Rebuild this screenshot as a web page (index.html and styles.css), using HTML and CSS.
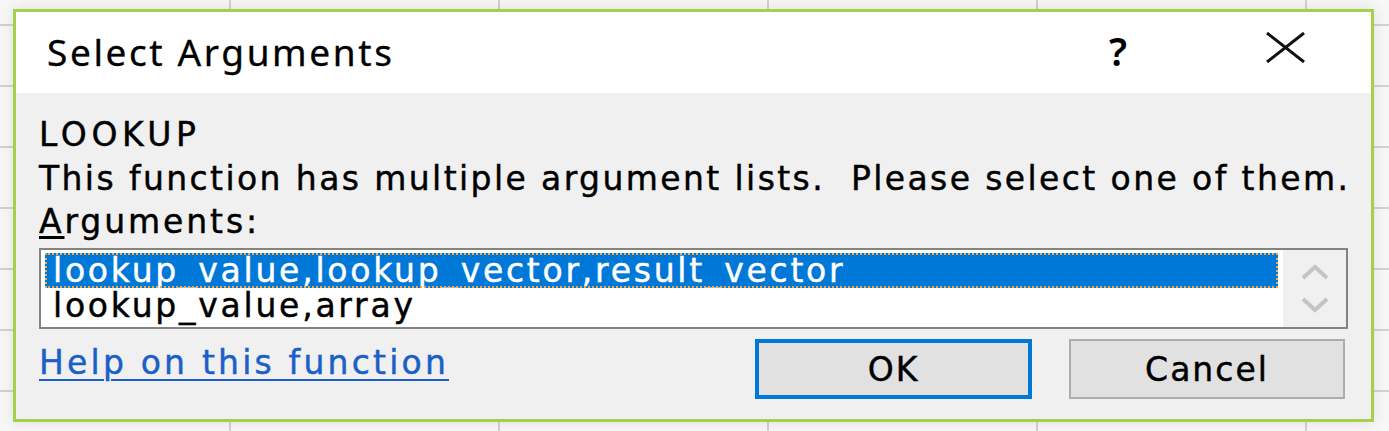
FILE: index.html
```html
<!DOCTYPE html>
<html>
<head>
<meta charset="utf-8">
<link rel="stylesheet" href="styles.css">
</head>
<body>
<div class="dialog">
  <div class="titlebar">
    <span class="title">Select Arguments</span>
    <span class="help">?</span>
    <span class="close"><svg width="41" height="31" viewBox="0 0 41 31"><path d="M2 1 L39 30 M39 1 L2 30" stroke="#111" stroke-width="3" fill="none"/></svg></span>
  </div>
  <div class="content">
    <div class="fname">LOOKUP</div>
    <div class="desc">This function has multiple argument lists.&nbsp; Please select one of them.</div>
    <div class="label"><span class="ul">A</span>rguments:</div>
    <div class="listbox">
      <div class="items">
        <div class="item selected">lookup_value,lookup_vector,result_vector</div>
        <div class="item">lookup_value,array</div>
      </div>
      <div class="scroll">
        <svg width="28" height="16" viewBox="0 0 28 16"><path d="M2 14 L14 3 L26 14" stroke="#c4c4c4" stroke-width="4" fill="none"/></svg>
        <svg width="28" height="16" viewBox="0 0 28 16"><path d="M2 2 L14 13 L26 2" stroke="#c4c4c4" stroke-width="4" fill="none"/></svg>
      </div>
    </div>
    <div class="footer">
      <a class="link" href="#">Help on this function</a>
      <div class="buttons">
        <button class="btn ok">OK</button>
        <button class="btn cancel">Cancel</button>
      </div>
    </div>
  </div>
</div>
</body>
</html>
```
FILE: styles.css
```css
html, body {
  margin: 0;
  padding: 0;
}
body {
  width: 1389px;
  height: 431px;
  overflow: hidden;
  background-color: #f7f7f7;
  background-image:
    linear-gradient(to right, #d2d2d2 2px, transparent 2px),
    linear-gradient(to bottom, #d2d2d2 2px, transparent 2px);
  background-size: 269px 61px;
  background-position: 229px 24px;
  font-family: "DejaVu Sans", Verdana, sans-serif;
  color: #000;
  padding-top: 9px;
  padding-left: 13px;
  box-sizing: border-box;
}
.dialog {
  width: 1361px;
  height: 413px;
  box-sizing: border-box;
  border: 3px solid #a3d14b;
  background: #f0f0f0;
  box-shadow: 0 0 14px rgba(0,0,0,0.10);
  display: flex;
  flex-direction: column;
}
.titlebar {
  height: 81px;
  background: #fff;
  display: flex;
  align-items: center;
  flex: none;
}
.title {
  font-family: "Noto Sans", "Open Sans", sans-serif;
  font-size: 37px;
  letter-spacing: 2.6px;
  padding-left: 31px;
  flex: 1;
  margin-top: -3px;
  -webkit-text-stroke: 0.3px #000;
}
.help {
  font-family: "Noto Sans", sans-serif;
  font-size: 39px;
  font-weight: 600;
  width: 40px;
  text-align: center;
  margin-right: 127px;
  margin-top: -5px;
}
.close {
  width: 41px;
  height: 31px;
  margin-right: 65px;
  margin-top: -10px;
}
.close svg { display: block; }
.content {
  flex: 1;
  padding: 20px 23px 0 23px;
  font-size: 33px;
  letter-spacing: 2.4px;
  -webkit-text-stroke: 0.45px #000;
}
.fname, .desc {
  height: 44px;
  line-height: 44px;
  white-space: nowrap;
}
.fname { letter-spacing: 4.6px; }
.label {
  height: 42px;
  line-height: 42px;
  letter-spacing: 2.9px;
}
.ul { text-decoration: underline; text-underline-offset: 3px; }
.listbox {
  margin-top: 5px;
  height: 81px;
  box-sizing: border-box;
  border: 2px solid #838383;
  background: #fff;
  display: flex;
  padding: 3px 0 0 4px;
}
.items {
  flex: 1;
  margin-right: 5px;
}
.item {
  height: 35px;
  line-height: 35px;
  padding-left: 8px;
  white-space: nowrap;
  letter-spacing: 2.75px;
}
.item.selected {
  background: #0078d7;
  color: #fff;
  -webkit-text-stroke: 0.45px #fff;
  outline: 2px dotted #f0a848;
  outline-offset: -2px;
}
.scroll {
  width: 63px;
  background: #f0f0f0;
  margin-top: -3px;
  display: flex;
  flex-direction: column;
  align-items: center;
  justify-content: center;
  gap: 17px;
}
.scroll svg { display: block; }
.footer {
  margin-top: 10px;
  display: flex;
  justify-content: space-between;
  align-items: flex-start;
}
.link {
  color: #1a60c8;
  -webkit-text-stroke: 0.45px #1a60c8;
  text-decoration: underline;
  text-decoration-thickness: 2px;
  text-underline-offset: 5px;
  margin-top: 2px;
  line-height: 44px;
  letter-spacing: 3.2px;
}
.buttons {
  display: flex;
  gap: 37px;
  margin-right: 3px;
}
.btn {
  height: 60px;
  width: 277px;
  box-sizing: border-box;
  background: #e1e1e1;
  font-family: "DejaVu Sans", Verdana, sans-serif;
  font-size: 33px;
  letter-spacing: 2px;
  color: #000;
  -webkit-text-stroke: 0.45px #000;
  padding: 0;
}
.ok {
  border: 4px solid #0078d7;
}
.cancel {
  width: 276px;
  border: 2px solid #adadad;
}
```
